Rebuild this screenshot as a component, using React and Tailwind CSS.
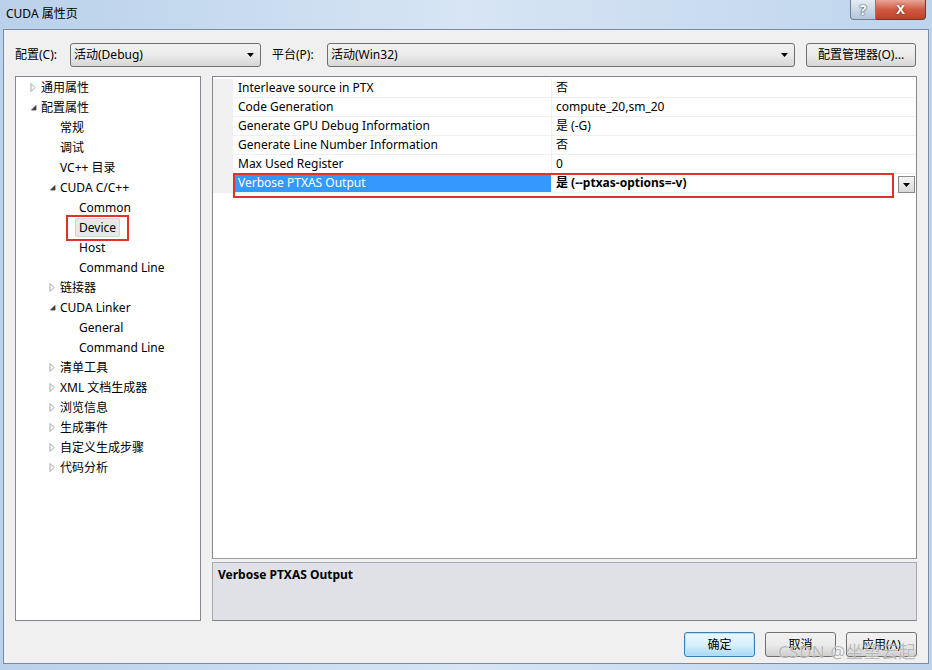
import React from 'react'

const tree = [
  { level: 0, label: '通用属性', exp: 'closed' },
  { level: 0, label: '配置属性', exp: 'open' },
  { level: 1, label: '常规' },
  { level: 1, label: '调试' },
  { level: 1, label: 'VC++ 目录' },
  { level: 1, label: 'CUDA C/C++', exp: 'open' },
  { level: 2, label: 'Common' },
  { level: 2, label: 'Device', selected: true },
  { level: 2, label: 'Host' },
  { level: 2, label: 'Command Line' },
  { level: 1, label: '链接器', exp: 'closed' },
  { level: 1, label: 'CUDA Linker', exp: 'open' },
  { level: 2, label: 'General' },
  { level: 2, label: 'Command Line' },
  { level: 1, label: '清单工具', exp: 'closed' },
  { level: 1, label: 'XML 文档生成器', exp: 'closed' },
  { level: 1, label: '浏览信息', exp: 'closed' },
  { level: 1, label: '生成事件', exp: 'closed' },
  { level: 1, label: '自定义生成步骤', exp: 'closed' },
  { level: 1, label: '代码分析', exp: 'closed' },
]

const props = [
  { name: 'Interleave source in PTX', value: '否' },
  { name: 'Code Generation', value: 'compute_20,sm_20' },
  { name: 'Generate GPU Debug Information', value: '是 (-G)' },
  { name: 'Generate Line Number Information', value: '否' },
  { name: 'Max Used Register', value: '0' },
  { name: 'Verbose PTXAS Output', value: '是 (--ptxas-options=-v)', selected: true },
]

const indent = ['w-0', 'w-[19px]', 'w-[38px]']

function Expander({ exp }) {
  if (exp === 'closed')
    return (
      <svg width="11" height="11" viewBox="0 0 11 11">
        <path d="M1 1.5 L5 5.5 L1 9.5 Z" fill="#fff" stroke="#a6a6a6" />
      </svg>
    )
  if (exp === 'open')
    return (
      <svg width="11" height="11" viewBox="0 0 11 11">
        <path d="M6 3.5 L6 8 L1.5 8 Z" fill="#404040" stroke="#404040" strokeWidth="0.8" />
      </svg>
    )
  return null
}

function TreeItem({ level, label, exp, selected }) {
  return (
    <div className="h-[20px] flex items-center">
      <div className={indent[level]} />
      <div className="w-[11px] h-[11px] flex items-center">
        <Expander exp={exp} />
      </div>
      <div className="relative">
        <span
          className={`block -ml-[4px] px-[3px] h-[19px] leading-[17px] border rounded-[2px] ${
            selected ? 'bg-[#e8e8e8] border-[#d4d4d4]' : 'border-transparent'
          }`}
        >
          {label}
        </span>
        {selected && (
          <div className="absolute -left-[13px] -top-[3px] w-[63px] h-[26px] border-2 border-[#e0312d]" />
        )}
      </div>
    </div>
  )
}

function PropRow({ name, value, selected }) {
  return (
    <div className="relative h-[19px] flex">
      <div className="w-[20px] bg-[#f0f0f0]" />
      <div
        className={`w-[319px] pl-[5px] leading-[18px] border-b border-r border-[#f0f0f0] ${
          selected ? 'bg-[#3399ff] text-white' : ''
        }`}
      >
        {name}
      </div>
      <div
        className={`flex-1 pl-[4px] leading-[18px] border-b border-[#f0f0f0] ${selected ? 'font-bold' : ''}`}
      >
        {value}
      </div>
      {selected && (
        <>
          <div className="absolute left-[20px] -top-[1px] w-[661px] h-[25px] border-2 border-[#e0312d]" />
          <div className="absolute right-[1px] top-[2px] w-[17px] h-[17px] border border-[#8a8a8a] bg-gradient-to-b from-[#f4f4f4] to-[#d8d8d8] flex items-center justify-center">
            <svg width="7" height="4" viewBox="0 0 7 4">
              <path d="M0 0 L7 0 L3.5 4 Z" fill="#000" />
            </svg>
          </div>
        </>
      )}
    </div>
  )
}

function Combo({ text, className }) {
  return (
    <div
      className={`h-[24px] flex items-center justify-between pl-[3px] pr-[6px] border border-[#707070] rounded-[3px] bg-gradient-to-b from-[#f2f2f2] via-[#ebebeb] to-[#d6d6d6] ${className}`}
    >
      <span>{text}</span>
      <svg width="7" height="4" viewBox="0 0 7 4">
        <path d="M0 0 L7 0 L3.5 4 Z" fill="#000" />
      </svg>
    </div>
  )
}

function Btn({ children, focused }) {
  return (
    <div
      className={`w-[71px] h-[25px] flex items-center justify-center rounded-[3px] border ${
        focused
          ? 'border-[#3c7fb1] bg-gradient-to-b from-[#eaf6fd] via-[#d9f0fc] to-[#a7d9f5] shadow-[inset_0_0_0_1px_#b5e0f8]'
          : 'border-[#707070] bg-gradient-to-b from-[#f2f2f2] via-[#ebebeb] to-[#cfcfcf]'
      }`}
    >
      {children}
    </div>
  )
}

export default function App() {
  return (
    <div className="relative w-[932px] h-[670px] flex flex-col overflow-hidden text-[12px] text-black font-['Noto_Sans','Noto_Sans_CJK_SC',sans-serif] bg-gradient-to-r from-[#b9d1ea] via-[#d7e5f4] to-[#bed4ec]">
      {/* title bar */}
      <div className="h-[29px] flex justify-between">
        <div className="pl-[6px] pt-[5px] leading-[18px]">CUDA 属性页</div>
        <div className="flex pr-[6px]">
          <div className="w-[26px] h-[20px] rounded-bl-[4px] border border-t-0 border-[#6d7f95] bg-gradient-to-b from-[#e4ecf5] to-[#b5c6da] flex items-center justify-center text-white font-bold text-[14px] [text-shadow:0_0_2px_#2c3e55,0_0_1px_#2c3e55]">
            ?
          </div>
          <div className="w-[50px] h-[20px] rounded-br-[4px] border border-t-0 border-l-0 border-[#6d3a32] bg-gradient-to-b from-[#e8a496] via-[#cf5a44] to-[#c24026] flex items-center justify-center text-white font-bold text-[13px] [text-shadow:0_0_2px_#5a1a10]">
            X
          </div>
        </div>
      </div>

      {/* client */}
      <div className="mx-[3px] h-[635px] bg-[#f0f0f0] border border-[#7b8da3] flex flex-col pt-[13px] px-[11px]">
        <div className="h-[24px] flex items-center">
          <span className="w-[55px]">配置(C):</span>
          <Combo text="活动(Debug)" className="w-[191px]" />
          <span className="ml-[11px] w-[55px]">平台(P):</span>
          <Combo text="活动(Win32)" className="w-[468px]" />
          <div className="ml-[11px] w-[110px] h-[24px] flex items-center justify-center border border-[#707070] rounded-[3px] bg-gradient-to-b from-[#f2f2f2] via-[#ebebeb] to-[#d6d6d6]">
            配置管理器(O)...
          </div>
        </div>

        <div className="mt-[9px] h-[545px] flex gap-[11px]">
          <div className="w-[186px] bg-white border border-[#828790] pl-[14px]">
            {tree.map((t, i) => (
              <TreeItem key={i} {...t} />
            ))}
          </div>
          <div className="flex-1 flex flex-col">
            <div className="flex-1 bg-white border border-[#828790] border-b-[#a0a0a0] pt-[2px]">
              {props.map((p) => (
                <PropRow key={p.name} {...p} />
              ))}
            </div>
            <div className="mt-[3px] h-[59px] bg-[#dfe1e7] border border-[#a5a9b1] border-b-[#7f8389] px-[5px] pt-[3px] font-bold">
              Verbose PTXAS Output
            </div>
          </div>
        </div>

        <div className="mt-[11px] flex justify-end gap-[10px]">
          <Btn focused>确定</Btn>
          <Btn>取消</Btn>
          <Btn>应用(A)</Btn>
        </div>
      </div>

      {/* watermark */}
      <div className="absolute right-[16px] bottom-[6px] text-[17px] text-[#9a9a9a]/70 [text-shadow:0_0_1px_#fff] tracking-[0.5px]">
        CSDN @坐望云起
      </div>
    </div>
  )
}
